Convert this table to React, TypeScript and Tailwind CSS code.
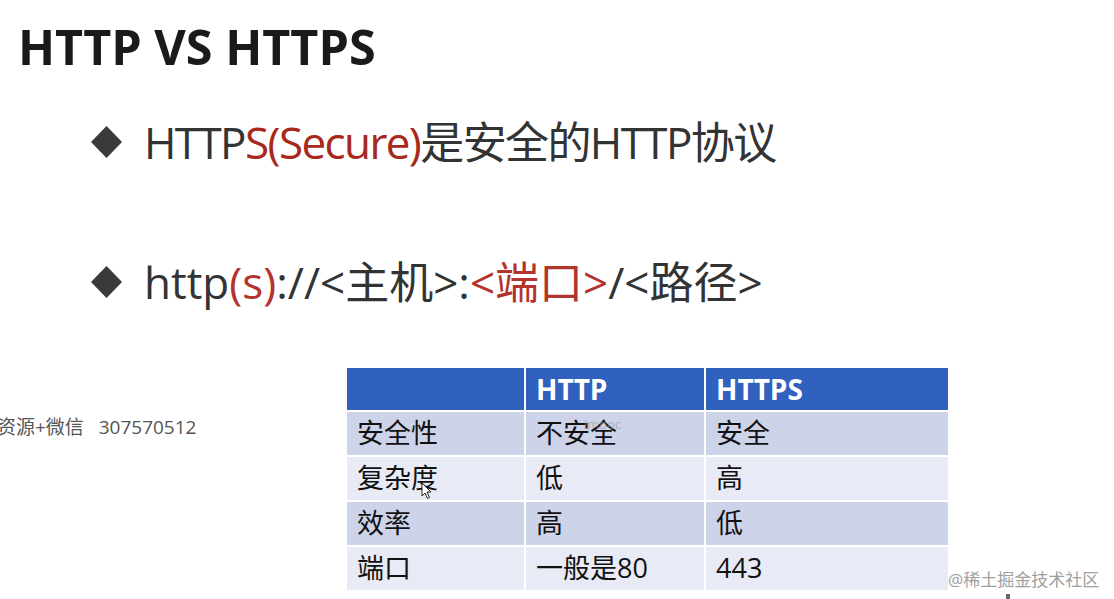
import React from "react";

const FONT = { fontFamily: '"Open Sans", "Noto Sans CJK SC", sans-serif' };

function Diamond() {
  return (
    <svg width="31" height="32" viewBox="0 0 31 32" className="shrink-0">
      <polygon points="15.5,0 31,16 15.5,32 0,16" fill="#3a3a3a" />
    </svg>
  );
}

const rows = [
  ["安全性", "不安全", "安全"],
  ["复杂度", "低", "高"],
  ["效率", "高", "低"],
  ["端口", "一般是80", "443"],
];

export default function App() {
  return (
    <div className="relative w-[1114px] h-[599px] overflow-hidden bg-white text-[#333]" style={FONT}>
      <div className="pt-[18px] pl-[18px] text-[48.5px] font-bold leading-[56px] text-[#1a1a1a]">HTTP VS HTTPS</div>

      <div className="mt-[46px] ml-[91px] flex items-center gap-[22px] h-[44px]">
        <Diamond />
        <div className="text-[44px] leading-none text-[#333] tracking-[-1.6px] whitespace-nowrap">
          HTTP<span className="text-[#a8281c]">S(Secure)</span>是安全的HTTP协议
        </div>
      </div>

      <div className="mt-[96px] ml-[91px] flex items-center gap-[22px] h-[44px]">
        <Diamond />
        <div className="text-[44px] leading-none text-[#333] whitespace-nowrap">
          http<span className="text-[#b3342c]">(s)</span>://&lt;主机&gt;:<span className="text-[#b3342c]">&lt;端口&gt;</span>/&lt;路径&gt;
        </div>
      </div>

      <div className="mt-[64px] flex">
        <div className="w-[347px] pt-[47px] text-[19px] leading-[24px] text-[#555] whitespace-nowrap ml-[-3px]">
          资源+微信&nbsp;&nbsp;&nbsp;307570512
        </div>
        <div className="grid grid-cols-[177px_178px_242px] grid-rows-[42px_43px_43px_43px_43px] gap-[2px] bg-white w-[601px] ml-[3px]">
          <div className="bg-[#3161bf]" />
          <div className="bg-[#3161bf] pl-[10px] flex items-center text-[28px] font-bold text-white">HTTP</div>
          <div className="bg-[#3161bf] pl-[10px] flex items-center text-[28px] font-bold text-white">HTTPS</div>
          {rows.map((r, i) => (
            <React.Fragment key={i}>
              {r.map((c, j) => (
                <div
                  key={j}
                  className={`${i % 2 === 0 ? "bg-[#cdd3e8]" : "bg-[#e8eaf5]"} pl-[10px] flex items-center text-[27px] text-[#111] whitespace-nowrap`}
                >
                  {c}
                </div>
              ))}
            </React.Fragment>
          ))}
        </div>
      </div>

      <div className="absolute left-[584px] top-[417px] text-[13px] leading-[14px] text-[#999] opacity-60">imooc</div>

      <svg className="absolute left-[421px] top-[482px]" width="12" height="18" viewBox="0 0 12 18">
        <path d="M1 1 L1 14 L4 11 L6.5 16.5 L8.5 15.5 L6 10 L10 10 Z" fill="white" stroke="#222" strokeWidth="1" />
      </svg>

      <div className="absolute left-[948px] top-[569px] text-[17px] leading-[22px] text-[#a0a0a0] whitespace-nowrap">@稀土掘金技术社区</div>
      <div className="absolute left-[1006px] top-[594px] w-[4px] h-[5px] bg-[#666]" />
    </div>
  );
}
